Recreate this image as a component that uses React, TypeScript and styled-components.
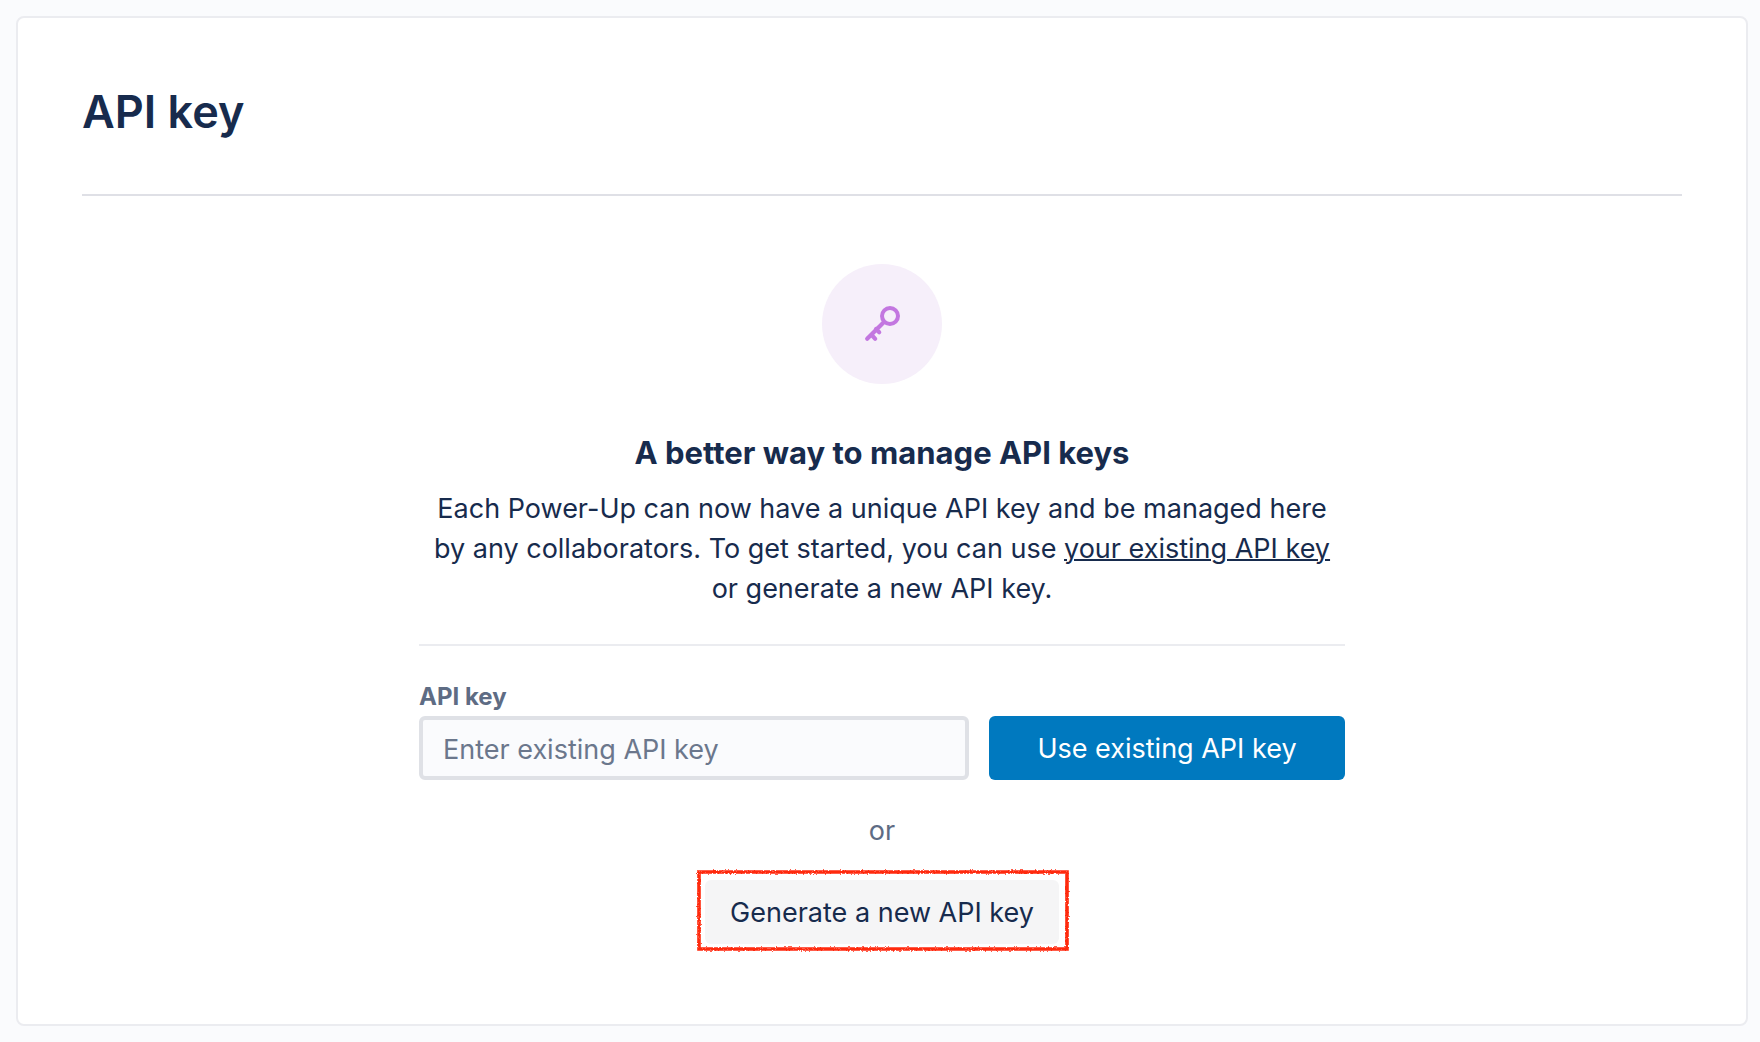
import React from "react";
import styled, { createGlobalStyle } from "styled-components";

const GlobalStyle = createGlobalStyle`
  *, *::before, *::after { box-sizing: border-box; }
  body {
    margin: 0;
    background: #fafbfd;
    color: #172b4d;
    font-family: Inter, "Liberation Sans", sans-serif;
    font-size: 27px;
    line-height: 40px;
  }
`;

const Card = styled.main`
  margin: 16px 12px 16px 16px;
  padding: 64px 64px 80px;
  background: #fff;
  border: 2px solid #ebecf0;
  border-radius: 8px;
`;

const PageTitle = styled.h1`
  margin: 0;
  padding-bottom: 52px;
  border-bottom: 2px solid #dfe0e6;
  font-size: 45px;
  font-weight: 600;
  line-height: 60px;
`;

const Panel = styled.section`
  display: flex;
  flex-direction: column;
  align-items: center;
  width: 100%;
  max-width: 926px;
  margin: 68px auto 0;
`;

const IconCircle = styled.div`
  display: grid;
  place-items: center;
  width: 120px;
  height: 120px;
  border-radius: 50%;
  background: #f6effa;
  color: #c377e0;
`;

const PanelTitle = styled.h2`
  margin: 47px 0 0;
  font-size: 31px;
  font-weight: 700;
  line-height: 44px;
`;

const Description = styled.p`
  margin: 14px 0 0;
  text-align: center;
`;

const TextLink = styled.a`
  color: inherit;
  text-decoration: underline;
  text-decoration-thickness: 2px;
`;

const KeyForm = styled.form`
  display: grid;
  grid-template-columns: minmax(0, 1fr) 356px;
  column-gap: 20px;
  width: 100%;
  margin-top: 35px;
  padding-top: 33px;
  border-top: 2px solid #ebecf0;
`;

const Label = styled.label`
  grid-column: 1 / -1;
  margin-bottom: 1px;
  color: #5e6c84;
  font-size: 24px;
  font-weight: 700;
  line-height: 36px;
`;

const KeyInput = styled.input`
  width: 100%;
  height: 64px;
  padding: 2px 20px 0;
  border: 4px solid #dfe1e6;
  border-radius: 6px;
  background: #fafbfd;
  color: #172b4d;
  font: inherit;
  &::placeholder { color: #6b778c; opacity: 1; }
`;

const Button = styled.button<{ $primary?: boolean }>`
  height: 64px;
  padding: 2px 24px 0;
  border: 0;
  border-radius: 6px;
  background: ${(p) => (p.$primary ? "#0079bf" : "#f5f5f6")};
  color: ${(p) => (p.$primary ? "#fff" : "#172b4d")};
  font: inherit;
  cursor: pointer;
`;

const Divider = styled.p`
  margin: 31px 0 29px;
  color: #5e6c84;
`;

const Highlight = styled.div`
  position: relative;
  display: grid;
  width: 354px;
`;

const Marker = styled.svg`
  position: absolute;
  top: -12px;
  left: -10px;
  width: 376px;
  height: 86px;
  pointer-events: none;
`;

function KeyIcon() {
  return (
    <svg width="40" height="40" viewBox="0 0 40 40" fill="none" stroke="currentColor" strokeLinecap="round" aria-hidden="true">
      <circle cx="28" cy="12" r="8" strokeWidth="4" />
      <path d="M21.5 18.5 5.2 34.8M9.4 30.6l3.8 4.2M14 25l3.2 3.2" strokeWidth="4.2" />
    </svg>
  );
}

function RedMarker() {
  return (
    <Marker viewBox="0 0 376 86" fill="none" aria-hidden="true">
      <filter id="rough" x="0" y="0" width="376" height="86" filterUnits="userSpaceOnUse">
        <feTurbulence type="fractalNoise" baseFrequency="0.6" numOctaves="2" seed="4" />
        <feDisplacementMap in="SourceGraphic" scale="3" xChannelSelector="R" yChannelSelector="G" />
      </filter>
      <path d="M2 4H372V81H4L4 4" stroke="#ff2a0a" strokeWidth="3.6" filter="url(#rough)" />
    </Marker>
  );
}

export default function App() {
  return (
    <>
      <GlobalStyle />
      <Card>
        <PageTitle>API key</PageTitle>
        <Panel>
          <IconCircle>
            <KeyIcon />
          </IconCircle>
          <PanelTitle>A better way to manage API keys</PanelTitle>
          <Description>
            Each Power-Up can now have a unique API key and be managed here
            <br />
            by any collaborators. To get started, you can use <TextLink href="#api-key">your existing API key</TextLink>
            <br />
            or generate a new API key.
          </Description>
          <KeyForm onSubmit={(e) => e.preventDefault()}>
            <Label htmlFor="api-key">API key</Label>
            <KeyInput id="api-key" type="text" placeholder="Enter existing API key" />
            <Button type="submit" $primary>
              Use existing API key
            </Button>
          </KeyForm>
          <Divider>or</Divider>
          <Highlight>
            <Button type="button">Generate a new API key</Button>
            <RedMarker />
          </Highlight>
        </Panel>
      </Card>
    </>
  );
}
